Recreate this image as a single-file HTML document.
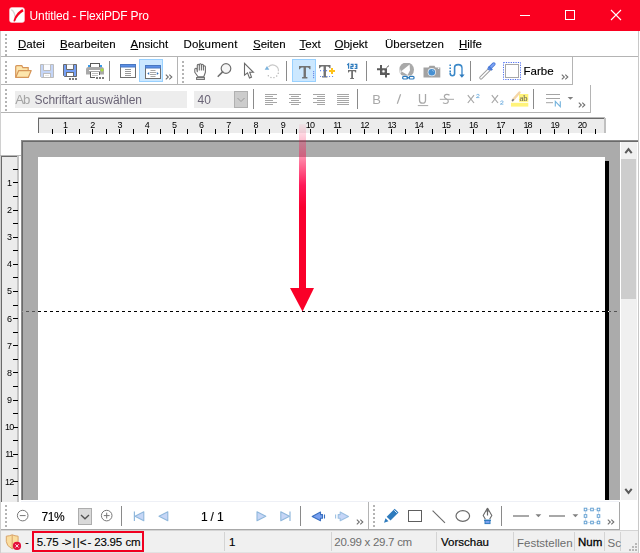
<!DOCTYPE html><html><head><meta charset="utf-8"><style>
*{margin:0;padding:0;box-sizing:border-box}
html,body{width:640px;height:553px;overflow:hidden;background:#fff;font-family:"Liberation Sans",sans-serif;position:relative}
.a{position:absolute}
.r{position:absolute}
.tx{position:absolute;white-space:nowrap;line-height:1}
svg{position:absolute;overflow:visible}
</style></head><body><div class="r" style="left:0px;top:0px;width:640px;height:31px;background:#fa0020;"></div>
<svg style="left:9px;top:7px" width="16" height="16" viewBox="0 0 16 16">
<rect x="0.5" y="0.5" width="15" height="15" rx="2.5" fill="#fff" stroke="#f6c8cc" stroke-width="0.6"/>
<path d="M2.3 2.6C4.6 3.8 6.2 6.5 6.6 13.6" stroke="#d4d4d4" stroke-width="1.4" fill="none"/>
<path d="M4.4 14.3C5.4 9.5 8.4 4.8 13.4 2L14.6 4.2C10.6 6.6 7.4 10.2 5.9 14.5Z" fill="#fa0020"/>
</svg>
<div class="tx" style="left:29.6px;top:10px;font-size:12px;color:#fff;letter-spacing:-0.15px">Untitled - FlexiPDF Pro</div>
<div class="r" style="left:520px;top:15px;width:10px;height:1px;background:#fff;"></div>
<div class="r" style="left:565px;top:10px;width:10px;height:10px;border:1px solid #fff"></div>
<svg style="left:611px;top:10px" width="10" height="10" viewBox="0 0 10 10"><path d="M0 0L10 10M10 0L0 10" stroke="#fff" stroke-width="1.1"/></svg>
<div class="r" style="left:0px;top:31px;width:1px;height:522px;background:#d0d0d0;"></div>
<div class="r" style="left:638px;top:31px;width:1px;height:522px;background:#c8c8c8;"></div>
<div class="r" style="left:1px;top:56px;width:637px;height:1px;background:#b4b4b4;"></div>
<div class="r" style="left:5px;top:34px;width:2px;height:2px;background:#b4b4b4;"></div><div class="r" style="left:5px;top:38px;width:2px;height:2px;background:#b4b4b4;"></div><div class="r" style="left:5px;top:42px;width:2px;height:2px;background:#b4b4b4;"></div><div class="r" style="left:5px;top:46px;width:2px;height:2px;background:#b4b4b4;"></div><div class="r" style="left:5px;top:50px;width:2px;height:2px;background:#b4b4b4;"></div><div class="r" style="left:5px;top:54px;width:2px;height:2px;background:#b4b4b4;"></div>
<div class="tx" style="left:18px;top:39px;font-size:11.5px;color:#000;-webkit-text-stroke:0.12px #000"><u>D</u>atei</div>
<div class="tx" style="left:60px;top:39px;font-size:11.5px;color:#000;-webkit-text-stroke:0.12px #000"><u>B</u>earbeiten</div>
<div class="tx" style="left:130.5px;top:39px;font-size:11.5px;color:#000;-webkit-text-stroke:0.12px #000"><u>A</u>nsicht</div>
<div class="tx" style="left:183.5px;top:39px;font-size:11.5px;color:#000;-webkit-text-stroke:0.12px #000"><span style="letter-spacing:0.2px">Do<u>k</u>ument</span></div>
<div class="tx" style="left:253px;top:39px;font-size:11.5px;color:#000;-webkit-text-stroke:0.12px #000"><u>S</u>eiten</div>
<div class="tx" style="left:299.5px;top:39px;font-size:11.5px;color:#000;-webkit-text-stroke:0.12px #000"><u>T</u>ext</div>
<div class="tx" style="left:334.5px;top:39px;font-size:11.5px;color:#000;-webkit-text-stroke:0.12px #000"><u>O</u>bjekt</div>
<div class="tx" style="left:385px;top:39px;font-size:11.5px;color:#000;-webkit-text-stroke:0.12px #000">Übersetzen</div>
<div class="tx" style="left:459px;top:39px;font-size:11.5px;color:#000;-webkit-text-stroke:0.12px #000"><u>H</u>ilfe</div>
<div class="r" style="left:1px;top:84px;width:572px;height:1px;background:#b4b4b4;"></div>
<div class="r" style="left:572px;top:57px;width:1px;height:28px;background:#b4b4b4;"></div>
<div class="r" style="left:177px;top:57px;width:1px;height:27px;background:#b4b4b4;"></div>
<div class="r" style="left:5px;top:61px;width:2px;height:2px;background:#b4b4b4;"></div><div class="r" style="left:5px;top:65px;width:2px;height:2px;background:#b4b4b4;"></div><div class="r" style="left:5px;top:69px;width:2px;height:2px;background:#b4b4b4;"></div><div class="r" style="left:5px;top:73px;width:2px;height:2px;background:#b4b4b4;"></div><div class="r" style="left:5px;top:77px;width:2px;height:2px;background:#b4b4b4;"></div><div class="r" style="left:5px;top:81px;width:2px;height:2px;background:#b4b4b4;"></div>
<div class="r" style="left:182px;top:61px;width:2px;height:2px;background:#b4b4b4;"></div><div class="r" style="left:182px;top:65px;width:2px;height:2px;background:#b4b4b4;"></div><div class="r" style="left:182px;top:69px;width:2px;height:2px;background:#b4b4b4;"></div><div class="r" style="left:182px;top:73px;width:2px;height:2px;background:#b4b4b4;"></div><div class="r" style="left:182px;top:77px;width:2px;height:2px;background:#b4b4b4;"></div><div class="r" style="left:182px;top:81px;width:2px;height:2px;background:#b4b4b4;"></div>
<div class="r" style="left:1px;top:112px;width:590px;height:1px;background:#b4b4b4;"></div>
<div class="r" style="left:590px;top:85px;width:1px;height:28px;background:#b4b4b4;"></div>
<div class="r" style="left:5px;top:89px;width:2px;height:2px;background:#b4b4b4;"></div><div class="r" style="left:5px;top:93px;width:2px;height:2px;background:#b4b4b4;"></div><div class="r" style="left:5px;top:97px;width:2px;height:2px;background:#b4b4b4;"></div><div class="r" style="left:5px;top:101px;width:2px;height:2px;background:#b4b4b4;"></div><div class="r" style="left:5px;top:105px;width:2px;height:2px;background:#b4b4b4;"></div><div class="r" style="left:5px;top:109px;width:2px;height:2px;background:#b4b4b4;"></div>
<div class="r" style="left:38px;top:117px;width:567px;height:1px;background:#b8b8b8;"></div>
<div class="r" style="left:38px;top:118px;width:566px;height:1px;background:#6a6a6a;"></div>
<div class="r" style="left:38px;top:118px;width:1px;height:15px;background:#6a6a6a;"></div>
<div class="r" style="left:39px;top:119px;width:565px;height:14px;background:#ececec;"></div>
<div class="r" style="left:604px;top:118px;width:2px;height:15px;background:#c0c0c0;"></div>
<div class="r" style="left:52px;top:129px;width:1px;height:5px;background:#000;"></div>
<div class="r" style="left:65px;top:129px;width:1px;height:5px;background:#000;"></div>
<div class="r" style="left:79px;top:129px;width:1px;height:5px;background:#000;"></div>
<div class="r" style="left:92px;top:129px;width:1px;height:5px;background:#000;"></div>
<div class="r" style="left:106px;top:129px;width:1px;height:5px;background:#000;"></div>
<div class="r" style="left:119px;top:129px;width:1px;height:5px;background:#000;"></div>
<div class="r" style="left:133px;top:129px;width:1px;height:5px;background:#000;"></div>
<div class="r" style="left:147px;top:129px;width:1px;height:5px;background:#000;"></div>
<div class="r" style="left:160px;top:129px;width:1px;height:5px;background:#000;"></div>
<div class="r" style="left:174px;top:129px;width:1px;height:5px;background:#000;"></div>
<div class="r" style="left:187px;top:129px;width:1px;height:5px;background:#000;"></div>
<div class="r" style="left:201px;top:129px;width:1px;height:5px;background:#000;"></div>
<div class="r" style="left:215px;top:129px;width:1px;height:5px;background:#000;"></div>
<div class="r" style="left:228px;top:129px;width:1px;height:5px;background:#000;"></div>
<div class="r" style="left:242px;top:129px;width:1px;height:5px;background:#000;"></div>
<div class="r" style="left:255px;top:129px;width:1px;height:5px;background:#000;"></div>
<div class="r" style="left:269px;top:129px;width:1px;height:5px;background:#000;"></div>
<div class="r" style="left:282px;top:129px;width:1px;height:5px;background:#000;"></div>
<div class="r" style="left:296px;top:129px;width:1px;height:5px;background:#000;"></div>
<div class="r" style="left:310px;top:129px;width:1px;height:5px;background:#000;"></div>
<div class="r" style="left:323px;top:129px;width:1px;height:5px;background:#000;"></div>
<div class="r" style="left:337px;top:129px;width:1px;height:5px;background:#000;"></div>
<div class="r" style="left:350px;top:129px;width:1px;height:5px;background:#000;"></div>
<div class="r" style="left:364px;top:129px;width:1px;height:5px;background:#000;"></div>
<div class="r" style="left:378px;top:129px;width:1px;height:5px;background:#000;"></div>
<div class="r" style="left:391px;top:129px;width:1px;height:5px;background:#000;"></div>
<div class="r" style="left:405px;top:129px;width:1px;height:5px;background:#000;"></div>
<div class="r" style="left:418px;top:129px;width:1px;height:5px;background:#000;"></div>
<div class="r" style="left:432px;top:129px;width:1px;height:5px;background:#000;"></div>
<div class="r" style="left:445px;top:129px;width:1px;height:5px;background:#000;"></div>
<div class="r" style="left:459px;top:129px;width:1px;height:5px;background:#000;"></div>
<div class="r" style="left:473px;top:129px;width:1px;height:5px;background:#000;"></div>
<div class="r" style="left:486px;top:129px;width:1px;height:5px;background:#000;"></div>
<div class="r" style="left:500px;top:129px;width:1px;height:5px;background:#000;"></div>
<div class="r" style="left:513px;top:129px;width:1px;height:5px;background:#000;"></div>
<div class="r" style="left:527px;top:129px;width:1px;height:5px;background:#000;"></div>
<div class="r" style="left:540px;top:129px;width:1px;height:5px;background:#000;"></div>
<div class="r" style="left:554px;top:129px;width:1px;height:5px;background:#000;"></div>
<div class="r" style="left:568px;top:129px;width:1px;height:5px;background:#000;"></div>
<div class="r" style="left:581px;top:129px;width:1px;height:5px;background:#000;"></div>
<div class="r" style="left:595px;top:129px;width:1px;height:5px;background:#000;"></div>
<div class="tx" style="left:55.6px;top:120.6px;width:20px;text-align:center;font-size:9px;color:#000;letter-spacing:-0.8px;text-indent:-0.8px">1</div>
<div class="tx" style="left:82.8px;top:120.6px;width:20px;text-align:center;font-size:9px;color:#000;letter-spacing:-0.8px;text-indent:-0.8px">2</div>
<div class="tx" style="left:110.0px;top:120.6px;width:20px;text-align:center;font-size:9px;color:#000;letter-spacing:-0.8px;text-indent:-0.8px">3</div>
<div class="tx" style="left:137.2px;top:120.6px;width:20px;text-align:center;font-size:9px;color:#000;letter-spacing:-0.8px;text-indent:-0.8px">4</div>
<div class="tx" style="left:164.4px;top:120.6px;width:20px;text-align:center;font-size:9px;color:#000;letter-spacing:-0.8px;text-indent:-0.8px">5</div>
<div class="tx" style="left:191.6px;top:120.6px;width:20px;text-align:center;font-size:9px;color:#000;letter-spacing:-0.8px;text-indent:-0.8px">6</div>
<div class="tx" style="left:218.8px;top:120.6px;width:20px;text-align:center;font-size:9px;color:#000;letter-spacing:-0.8px;text-indent:-0.8px">7</div>
<div class="tx" style="left:246.0px;top:120.6px;width:20px;text-align:center;font-size:9px;color:#000;letter-spacing:-0.8px;text-indent:-0.8px">8</div>
<div class="tx" style="left:273.2px;top:120.6px;width:20px;text-align:center;font-size:9px;color:#000;letter-spacing:-0.8px;text-indent:-0.8px">9</div>
<div class="tx" style="left:300.4px;top:120.6px;width:20px;text-align:center;font-size:9px;color:#000;letter-spacing:-0.8px;text-indent:-0.8px">10</div>
<div class="tx" style="left:327.6px;top:120.6px;width:20px;text-align:center;font-size:9px;color:#000;letter-spacing:-0.8px;text-indent:-0.8px">11</div>
<div class="tx" style="left:354.8px;top:120.6px;width:20px;text-align:center;font-size:9px;color:#000;letter-spacing:-0.8px;text-indent:-0.8px">12</div>
<div class="tx" style="left:382.0px;top:120.6px;width:20px;text-align:center;font-size:9px;color:#000;letter-spacing:-0.8px;text-indent:-0.8px">13</div>
<div class="tx" style="left:409.2px;top:120.6px;width:20px;text-align:center;font-size:9px;color:#000;letter-spacing:-0.8px;text-indent:-0.8px">14</div>
<div class="tx" style="left:436.4px;top:120.6px;width:20px;text-align:center;font-size:9px;color:#000;letter-spacing:-0.8px;text-indent:-0.8px">15</div>
<div class="tx" style="left:463.6px;top:120.6px;width:20px;text-align:center;font-size:9px;color:#000;letter-spacing:-0.8px;text-indent:-0.8px">16</div>
<div class="tx" style="left:490.8px;top:120.6px;width:20px;text-align:center;font-size:9px;color:#000;letter-spacing:-0.8px;text-indent:-0.8px">17</div>
<div class="tx" style="left:518.0px;top:120.6px;width:20px;text-align:center;font-size:9px;color:#000;letter-spacing:-0.8px;text-indent:-0.8px">18</div>
<div class="tx" style="left:545.2px;top:120.6px;width:20px;text-align:center;font-size:9px;color:#000;letter-spacing:-0.8px;text-indent:-0.8px">19</div>
<div class="tx" style="left:572.4px;top:120.6px;width:20px;text-align:center;font-size:9px;color:#000;letter-spacing:-0.8px;text-indent:-0.8px">20</div>
<div class="r" style="left:0px;top:155px;width:21px;height:1px;background:#b8b8b8;"></div>
<div class="r" style="left:1px;top:156px;width:16px;height:1px;background:#6a6a6a;"></div>
<div class="r" style="left:1px;top:156px;width:1px;height:346px;background:#6a6a6a;"></div>
<div class="r" style="left:2px;top:157px;width:15px;height:345px;background:#ececec;"></div>
<div class="r" style="left:17px;top:156px;width:2px;height:346px;background:#c4c4c4;"></div>
<div class="r" style="left:13px;top:169px;width:5px;height:1px;background:#000;"></div>
<div class="r" style="left:13px;top:182px;width:5px;height:1px;background:#000;"></div>
<div class="r" style="left:13px;top:196px;width:5px;height:1px;background:#000;"></div>
<div class="r" style="left:13px;top:210px;width:5px;height:1px;background:#000;"></div>
<div class="r" style="left:13px;top:223px;width:5px;height:1px;background:#000;"></div>
<div class="r" style="left:13px;top:237px;width:5px;height:1px;background:#000;"></div>
<div class="r" style="left:13px;top:250px;width:5px;height:1px;background:#000;"></div>
<div class="r" style="left:13px;top:264px;width:5px;height:1px;background:#000;"></div>
<div class="r" style="left:13px;top:277px;width:5px;height:1px;background:#000;"></div>
<div class="r" style="left:13px;top:291px;width:5px;height:1px;background:#000;"></div>
<div class="r" style="left:13px;top:305px;width:5px;height:1px;background:#000;"></div>
<div class="r" style="left:13px;top:318px;width:5px;height:1px;background:#000;"></div>
<div class="r" style="left:13px;top:332px;width:5px;height:1px;background:#000;"></div>
<div class="r" style="left:13px;top:345px;width:5px;height:1px;background:#000;"></div>
<div class="r" style="left:13px;top:359px;width:5px;height:1px;background:#000;"></div>
<div class="r" style="left:13px;top:372px;width:5px;height:1px;background:#000;"></div>
<div class="r" style="left:13px;top:386px;width:5px;height:1px;background:#000;"></div>
<div class="r" style="left:13px;top:400px;width:5px;height:1px;background:#000;"></div>
<div class="r" style="left:13px;top:413px;width:5px;height:1px;background:#000;"></div>
<div class="r" style="left:13px;top:427px;width:5px;height:1px;background:#000;"></div>
<div class="r" style="left:13px;top:440px;width:5px;height:1px;background:#000;"></div>
<div class="r" style="left:13px;top:454px;width:5px;height:1px;background:#000;"></div>
<div class="r" style="left:13px;top:468px;width:5px;height:1px;background:#000;"></div>
<div class="r" style="left:13px;top:481px;width:5px;height:1px;background:#000;"></div>
<div class="r" style="left:13px;top:495px;width:5px;height:1px;background:#000;"></div>
<div class="tx" style="left:-0.4px;top:178.8px;width:20px;text-align:center;font-size:9px;color:#000;letter-spacing:-0.8px;text-indent:-0.8px">1</div>
<div class="tx" style="left:-0.4px;top:205.9px;width:20px;text-align:center;font-size:9px;color:#000;letter-spacing:-0.8px;text-indent:-0.8px">2</div>
<div class="tx" style="left:-0.4px;top:233.1px;width:20px;text-align:center;font-size:9px;color:#000;letter-spacing:-0.8px;text-indent:-0.8px">3</div>
<div class="tx" style="left:-0.4px;top:260.2px;width:20px;text-align:center;font-size:9px;color:#000;letter-spacing:-0.8px;text-indent:-0.8px">4</div>
<div class="tx" style="left:-0.4px;top:287.4px;width:20px;text-align:center;font-size:9px;color:#000;letter-spacing:-0.8px;text-indent:-0.8px">5</div>
<div class="tx" style="left:-0.4px;top:314.6px;width:20px;text-align:center;font-size:9px;color:#000;letter-spacing:-0.8px;text-indent:-0.8px">6</div>
<div class="tx" style="left:-0.4px;top:341.7px;width:20px;text-align:center;font-size:9px;color:#000;letter-spacing:-0.8px;text-indent:-0.8px">7</div>
<div class="tx" style="left:-0.4px;top:368.9px;width:20px;text-align:center;font-size:9px;color:#000;letter-spacing:-0.8px;text-indent:-0.8px">8</div>
<div class="tx" style="left:-0.4px;top:396.0px;width:20px;text-align:center;font-size:9px;color:#000;letter-spacing:-0.8px;text-indent:-0.8px">9</div>
<div class="tx" style="left:-0.4px;top:423.2px;width:20px;text-align:center;font-size:9px;color:#000;letter-spacing:-0.8px;text-indent:-0.8px">10</div>
<div class="tx" style="left:-0.4px;top:450.4px;width:20px;text-align:center;font-size:9px;color:#000;letter-spacing:-0.8px;text-indent:-0.8px">11</div>
<div class="tx" style="left:-0.4px;top:477.5px;width:20px;text-align:center;font-size:9px;color:#000;letter-spacing:-0.8px;text-indent:-0.8px">12</div>
<div class="r" style="left:21px;top:140px;width:599px;height:360px;background:#ababab;"></div>
<div class="r" style="left:21px;top:140px;width:617px;height:1px;background:#8c8c8c;"></div>
<div class="r" style="left:21px;top:140px;width:1px;height:360px;background:#8c8c8c;"></div>
<div class="r" style="left:22px;top:141px;width:616px;height:1px;background:#6a6a6a;"></div>
<div class="r" style="left:22px;top:141px;width:1px;height:359px;background:#6a6a6a;"></div>
<div class="r" style="left:38px;top:157px;width:567px;height:343px;background:#fff;"></div>
<div class="r" style="left:605px;top:161px;width:4px;height:339px;background:#000;"></div>
<div class="r" style="left:620px;top:142px;width:1px;height:358px;background:#fff;"></div>
<div class="r" style="left:621px;top:142px;width:17px;height:358px;background:#f0f0f0;"></div>
<div class="r" style="left:637px;top:142px;width:1px;height:358px;background:#fff;"></div>
<div class="r" style="left:621px;top:159px;width:15px;height:140px;background:#cdcdcd;"></div>
<svg style="left:624px;top:147px" width="10" height="8" viewBox="0 0 10 8"><path d="M1.3 6.2L4.5 2.2L7.7 6.2" stroke="#5a5a5a" stroke-width="2" fill="none"/></svg>
<svg style="left:624px;top:487px" width="10" height="8" viewBox="0 0 10 8"><path d="M1.3 1.8L4.5 5.8L7.7 1.8" stroke="#5a5a5a" stroke-width="2" fill="none"/></svg>
<div class="r" style="left:22px;top:311px;width:595px;height:1px;background:repeating-linear-gradient(to right,#fff 0 3px,transparent 3px 6px);background-position:-2px 0;mix-blend-mode:difference"></div>
<div class="r" style="left:299px;top:124px;width:7px;height:166px;background:linear-gradient(to bottom,rgba(255,0,70,0.04),rgba(255,0,70,0.45) 20%,rgba(255,0,70,0.9) 37%,#fa0030 50%,#fa0028 100%)"></div>
<svg style="left:289px;top:287px" width="26" height="25" viewBox="0 0 26 25"><path d="M1 1L25 1L13.5 24.5Z" fill="#fa0028"/></svg>
<div class="r" style="left:21px;top:501px;width:598px;height:1px;background:#eef0f6;"></div>
<div class="r" style="left:1px;top:529px;width:619px;height:1px;background:#a8a8a8;"></div>
<div class="r" style="left:619px;top:502px;width:1px;height:28px;background:#a8a8a8;"></div>
<div class="r" style="left:368px;top:502px;width:1px;height:27px;background:#b4b4b4;"></div>
<div class="r" style="left:5px;top:505px;width:2px;height:2px;background:#b4b4b4;"></div><div class="r" style="left:5px;top:509px;width:2px;height:2px;background:#b4b4b4;"></div><div class="r" style="left:5px;top:513px;width:2px;height:2px;background:#b4b4b4;"></div><div class="r" style="left:5px;top:517px;width:2px;height:2px;background:#b4b4b4;"></div><div class="r" style="left:5px;top:521px;width:2px;height:2px;background:#b4b4b4;"></div><div class="r" style="left:5px;top:525px;width:2px;height:2px;background:#b4b4b4;"></div>
<div class="r" style="left:373px;top:505px;width:2px;height:2px;background:#b4b4b4;"></div><div class="r" style="left:373px;top:509px;width:2px;height:2px;background:#b4b4b4;"></div><div class="r" style="left:373px;top:513px;width:2px;height:2px;background:#b4b4b4;"></div><div class="r" style="left:373px;top:517px;width:2px;height:2px;background:#b4b4b4;"></div><div class="r" style="left:373px;top:521px;width:2px;height:2px;background:#b4b4b4;"></div><div class="r" style="left:373px;top:525px;width:2px;height:2px;background:#b4b4b4;"></div>
<div class="r" style="left:1px;top:530px;width:637px;height:1px;background:#d4d4d4;"></div>
<div class="r" style="left:1px;top:531px;width:637px;height:22px;background:#f0f0f0;"></div>
<div class="r" style="left:1px;top:552px;width:637px;height:1px;background:#e2e2e2;"></div>
<div class="r" style="left:224px;top:532px;width:1px;height:19px;background:#d4d4d4;"></div>
<div class="r" style="left:331px;top:532px;width:1px;height:19px;background:#d4d4d4;"></div>
<div class="r" style="left:436px;top:532px;width:1px;height:19px;background:#d4d4d4;"></div>
<div class="r" style="left:513px;top:532px;width:1px;height:19px;background:#d4d4d4;"></div>
<div class="r" style="left:574px;top:532px;width:1px;height:19px;background:#d4d4d4;"></div>
<div class="r" style="left:604px;top:532px;width:1px;height:19px;background:#d4d4d4;"></div>
<div class="r" style="left:620px;top:532px;width:1px;height:19px;background:#d4d4d4;"></div>
<div class="r" style="left:32px;top:531px;width:112px;height:21px;border:2px solid #f00020"></div>
<div class="tx" style="left:36.8px;top:537.2px;font-size:11.5px;color:#000;letter-spacing:-0.2px;-webkit-text-stroke:0.12px #000">5.75</div>
<div class="tx" style="left:61.8px;top:537.2px;font-size:11.5px;color:#000;letter-spacing:-0.2px;-webkit-text-stroke:0.12px #000">-</div>
<div class="tx" style="left:64.8px;top:537.2px;font-size:11.5px;color:#000;letter-spacing:-0.2px;-webkit-text-stroke:0.12px #000">&gt;</div>
<div class="tx" style="left:72.4px;top:537.2px;font-size:11.5px;color:#000;letter-spacing:-0.2px;-webkit-text-stroke:0.12px #000">|</div>
<div class="tx" style="left:76.7px;top:537.2px;font-size:11.5px;color:#000;letter-spacing:-0.2px;-webkit-text-stroke:0.12px #000">|</div>
<div class="tx" style="left:79.8px;top:537.2px;font-size:11.5px;color:#000;letter-spacing:-0.2px;-webkit-text-stroke:0.12px #000">&lt;</div>
<div class="tx" style="left:87.4px;top:537.2px;font-size:11.5px;color:#000;letter-spacing:-0.2px;-webkit-text-stroke:0.12px #000">-</div>
<div class="tx" style="left:94.2px;top:537.2px;font-size:11.5px;color:#000;letter-spacing:-0.2px;-webkit-text-stroke:0.12px #000">23.95</div>
<div class="tx" style="left:125.4px;top:537.2px;font-size:11.5px;color:#000;letter-spacing:-0.2px;-webkit-text-stroke:0.12px #000">cm</div>
<div class="tx" style="left:25px;top:536.6px;font-size:11.5px;color:#000;">-</div>
<div class="tx" style="left:229px;top:537.2px;font-size:11.5px;color:#000;-webkit-text-stroke:0.15px #000">1</div>
<div class="tx" style="left:334.3px;top:537.2px;font-size:11.5px;color:#6d6d6d;letter-spacing:-0.28px">20.99 x 29.7 cm</div>
<div class="tx" style="left:441px;top:537.2px;font-size:11.5px;color:#000;-webkit-text-stroke:0.2px #000">Vorschau</div>
<div class="tx" style="left:517px;top:537.5px;font-size:11.5px;color:#6d6d6d;">Feststellen</div>
<div class="tx" style="left:578px;top:537.2px;font-size:11.5px;color:#000;-webkit-text-stroke:0.3px #000">Num</div>
<div class="tx" style="left:607.5px;top:537.5px;font-size:11.5px;color:#6d6d6d;">Sc</div>
<div class="r" style="left:635px;top:543px;width:2px;height:2px;background:#b8b8b8;"></div>
<div class="r" style="left:632px;top:546px;width:2px;height:2px;background:#b8b8b8;"></div>
<div class="r" style="left:635px;top:546px;width:2px;height:2px;background:#b8b8b8;"></div>
<div class="r" style="left:629px;top:549px;width:2px;height:2px;background:#b8b8b8;"></div>
<div class="r" style="left:632px;top:549px;width:2px;height:2px;background:#b8b8b8;"></div>
<div class="r" style="left:635px;top:549px;width:2px;height:2px;background:#b8b8b8;"></div>
<svg style="left:15px;top:65px" width="18" height="14" viewBox="0 0 18 14"><path d="M0.7 12.3V1.8Q0.7 0.7 1.8 0.7H6.8L7.9 2.6H13.2V5.6" fill="#fde6ad" stroke="#d6965a" stroke-width="1.2"/><path d="M0.7 12.4L3.7 5.6H16.2L13.3 12.4Z" fill="#fde6ad" stroke="#d6965a" stroke-width="1.2" stroke-linejoin="round"/></svg>
<svg style="left:40px;top:64px" width="14" height="14" viewBox="0 0 14 14"><path d="M0.5 0.5H13.5V13.5H1.5L0.5 12.5Z" fill="#c4d5f7" stroke="#bcbcbc"/><path d="M3.5 0.5V6.5H10.5V0.5" fill="#fbfcff" stroke="#bcbcbc"/><rect x="3.5" y="9.5" width="7" height="4" fill="#fff" stroke="#bcbcbc"/><path d="M5 11.5H9" stroke="#e4e4e4"/></svg>
<svg style="left:63px;top:64px" width="15" height="17" viewBox="0 0 15 17"><path d="M0.5 0.5H13.5V12.5H1.5L0.5 11.5Z" fill="#76a0f4" stroke="#6a6a6a"/><path d="M3.5 0.5V5.5H10.5V0.5" fill="#fbfcff" stroke="#6a6a6a"/><rect x="3.5" y="8.5" width="7" height="4" fill="#fff" stroke="#6a6a6a"/><rect x="6" y="14" width="2" height="2" fill="#7a7a7a"/><rect x="9" y="14" width="2" height="2" fill="#7a7a7a"/><rect x="12" y="14" width="2" height="2" fill="#7a7a7a"/></svg>
<svg style="left:86px;top:63px" width="19" height="17" viewBox="0 0 19 17"><rect x="2" y="2" width="2" height="2" fill="#3a9ae8"/><rect x="14" y="2" width="2" height="2" fill="#3a9ae8"/><rect x="4.5" y="0.5" width="9" height="4" fill="#fff" stroke="#5a5a5a"/><path d="M0 6.5Q0 4 2.5 4H15.5Q18 4 18 6.5V11.5H0Z" fill="#a9a9a9"/><rect x="3" y="7" width="11" height="1" fill="#fff"/><path d="M16 5.5V8.5M14.5 7H17.5" stroke="#a8e03a" stroke-width="1.6"/><path d="M4.5 9V14.5H9" stroke="#5a5a5a" fill="none"/><path d="M5 9H13.5V12.5" fill="#fff"/><rect x="5" y="9" width="8.5" height="5" fill="#fff"/><path d="M4.5 9V14.5H9M13.5 9V12" stroke="#5a5a5a" fill="none"/><path d="M6 10.5H12M6 12.5H12" stroke="#c0c0c0"/><rect x="10" y="14" width="2" height="2" fill="#7a7a7a"/><rect x="13" y="14" width="2" height="2" fill="#7a7a7a"/><rect x="16" y="14" width="2" height="2" fill="#7a7a7a"/></svg>
<div class="r" style="left:109px;top:61px;width:1px;height:20px;background:#8a8a8a"></div>
<svg style="left:120px;top:64px" width="16" height="14" viewBox="0 0 16 14"><rect x="0.5" y="0.5" width="15" height="13" fill="#fff" stroke="#6e6e6e"/><rect x="0.5" y="0.5" width="15" height="2.5" fill="#5b8fe8" stroke="#4a78c0" stroke-width="1"/><path d="M5 5.5H11M5 7.5H11M5 9.5H11M5 11.5H11" stroke="#9a9a9a"/></svg>
<div class="r" style="left:139px;top:59px;width:24px;height:23px;background:#cce8ff;border:1px solid #99d1ff"></div>
<svg style="left:145px;top:65px" width="16" height="14" viewBox="0 0 16 14"><rect x="0.5" y="0.5" width="15" height="13" fill="#fff" stroke="#6e6e6e"/><rect x="0.5" y="0.5" width="15" height="2.5" fill="#5b8fe8" stroke="#4a78c0" stroke-width="1"/><path d="M5.5 5.5H10.5M5 7.5H11M5 9.5H11M5.5 11.5H10.5" stroke="#a8a8a8"/><path d="M2.3 8.5L4.2 7V10Z M13.7 8.5L11.8 7V10Z" fill="#2f6fb8"/></svg>
<svg style="left:165px;top:74px" width="8" height="6" viewBox="0 0 8 6"><path d="M0.8 0.7L3.3 3L0.8 5.3M4.3 0.7L6.8 3L4.3 5.3" stroke="#707070" stroke-width="1.1" fill="none"/></svg>
<svg style="left:190px;top:60px" width="20" height="22" viewBox="0 0 20 22"><path d="M8 16.8L4.8 12.2V9.3Q4.8 8.3 5.8 8.3Q6.8 8.3 6.9 9.3L7.3 11.8V5.2Q7.3 4.2 8.3 4.2Q9.3 4.2 9.3 5.2V4.8Q9.3 3.8 10.4 3.8Q11.4 3.8 11.4 4.8V5.3Q11.4 4.3 12.4 4.3Q13.4 4.3 13.4 5.3V6.7Q13.4 5.7 14.4 5.7Q15.4 5.7 15.4 6.7V12.2L13.8 16.8Z" fill="#fff" stroke="#6e6e6e" stroke-width="1.1" stroke-linejoin="round"/><path d="M9.3 5V10.6M11.4 5V10.6M13.4 5.5V10.6" stroke="#6e6e6e" stroke-width="1.1"/><rect x="6.6" y="17.6" width="7.8" height="1.8" fill="#fff" stroke="#6e6e6e" stroke-width="1.1"/></svg>
<svg style="left:216px;top:62px" width="16" height="16" viewBox="0 0 16 16"><circle cx="10" cy="6.5" r="4.8" fill="#f6f6f6" stroke="#707070" stroke-width="1.2"/><path d="M6.6 9.9L2.2 14.3" stroke="#707070" stroke-width="1.6" stroke-linecap="round"/></svg>
<svg style="left:240px;top:60px" width="18" height="22" viewBox="0 0 18 22"><path d="M4.5 3.3V15.2L7.5 12.9L9.5 18L11.5 17.1L9.7 12.3H13.4Z" fill="#fff" stroke="#6a6a6a" stroke-width="1.1" stroke-linejoin="miter"/></svg>
<svg style="left:262px;top:62px" width="20" height="18" viewBox="0 0 20 18"><path d="M6.5 4.8A5.7 5.7 0 0 1 16.4 9.2" stroke="#c8c8c8" stroke-width="1.1" fill="none"/><path d="M16.2 11.2A5.7 5.7 0 0 1 5.2 11.8" stroke="#b0b0b0" stroke-width="1.3" fill="none" stroke-dasharray="0.1 3" stroke-linecap="round"/><path d="M2.7 7.7L5 3.9L7.3 7.7Z" fill="#7ab2dc"/></svg>
<div class="r" style="left:286px;top:61px;width:1px;height:20px;background:#8a8a8a"></div>
<div class="r" style="left:292px;top:59px;width:24px;height:23px;background:#cce8ff;border:1px solid #99d1ff"></div>
<svg style="left:298.8px;top:65.6px" width="12" height="13" viewBox="0 0 12 13"><path d="M0 0H11.5V3.3H10.5Q10.3 1.6 8.6 1.6H6.95V10.9H8.4V12.4H3.1V10.9H4.55V1.6H2.9Q1.2 1.6 1 3.3H0Z" fill="#727272"/></svg>
<svg style="left:313px;top:71px" width="2" height="8" viewBox="0 0 2 8"><rect x="0" y="0" width="1.2" height="1.2" fill="#7090e8"/><rect x="0" y="2" width="1.2" height="1.2" fill="#7090e8"/><rect x="0" y="4" width="1.2" height="1.2" fill="#7090e8"/><rect x="0" y="6" width="1.2" height="1.2" fill="#7090e8"/></svg>
<svg style="left:319px;top:65px" width="18" height="13" viewBox="0 0 18 13"><path d="M0 0H11.5V3.3H10.5Q10.3 1.6 8.6 1.6H6.95V10.9H8.4V12.4H3.1V10.9H4.55V1.6H2.9Q1.2 1.6 1 3.3H0Z" fill="#727272"/><path d="M1 5.6H11M1 11.5H15" stroke="#6a8ae8" stroke-width="1.1" stroke-dasharray="1.1 1.9"/><path d="M13 3V9M10 6H16" stroke="#ffc21a" stroke-width="2"/></svg>
<svg style="left:346px;top:63px" width="12" height="7" viewBox="0 0 12 7"><path d="M1.2 1.9L2.6 0.8V5.8" stroke="#2f7bbd" stroke-width="1.25" fill="none"/><path d="M4.6 1.3H7V3.3H4.9V5.3H7.3" stroke="#2f7bbd" stroke-width="1.25" fill="none"/><path d="M8.6 1.3H10.8V5.3H8.6M9.4 3.3H10.8" stroke="#2f7bbd" stroke-width="1.25" fill="none"/></svg>
<svg style="left:348px;top:70px" width="9" height="10" viewBox="0 0 9 10"><path d="M0 0H8.2V2.6H7.4Q7.2 1.2 6 1.2H5V8.1H6V9.1H2.2V8.1H3.2V1.2H2.2Q1 1.2 0.8 2.6H0Z" fill="#707070"/></svg>
<div class="r" style="left:366px;top:61px;width:1px;height:20px;background:#8a8a8a"></div>
<svg style="left:376px;top:64px" width="14" height="14" viewBox="0 0 14 14"><path d="M5 1V10M1 5.2H10M10 4.3V13.6M4 10H13.6" stroke="#5a5a5a" stroke-width="2"/><rect x="5" y="5.2" width="5" height="4.8" fill="#5a5a5a"/><circle cx="7.5" cy="7.3" r="1.4" fill="#fff" stroke="#909090" stroke-width="0.6"/><path d="M10.5 3.7L13 1.6" stroke="#5a5a5a" stroke-width="1"/></svg>
<svg style="left:398px;top:63px" width="18" height="17" viewBox="0 0 18 17"><defs><clipPath id="gc"><rect x="0" y="0" width="18" height="12.6"/></clipPath></defs><g clip-path="url(#gc)"><circle cx="8.6" cy="6.8" r="7.4" fill="#a9a9a9"/><path d="M1.5 5Q1 8 2.2 11L3.5 9Z" fill="#e6e6e6"/><path d="M3.2 8.3L11.6 1.6L12 7.2L9.6 12Z" fill="#fff"/></g><rect x="4.6" y="13.4" width="5" height="2.6" rx="1.3" fill="none" stroke="#2f7bbd" stroke-width="1.2"/><rect x="11.1" y="13.4" width="5" height="2.6" rx="1.3" fill="none" stroke="#2f7bbd" stroke-width="1.2"/><path d="M8.5 14.7H12" stroke="#2f7bbd" stroke-width="1.2"/></svg>
<svg style="left:423px;top:65px" width="18" height="13" viewBox="0 0 18 13"><path d="M0.5 2.5H5.5L6.5 0.7H11.5L12.5 2.5H17.3V12.5H0.5Z" fill="#a2a2a2"/><circle cx="8.8" cy="7.2" r="4.1" fill="#e8eef4"/><circle cx="8.8" cy="7.2" r="3.3" fill="#4690d2"/><path d="M9.3 5.2L10.6 6.3" stroke="#bcd8f0" stroke-width="0.9"/><circle cx="15.6" cy="3.3" r="0.8" fill="#fff"/></svg>
<svg style="left:448px;top:63px" width="18" height="16" viewBox="0 0 18 16"><path d="M2.2 1.5V3M2.2 4.5V6M2.2 7.5V9" stroke="#3a88c8" stroke-width="1.6"/><path d="M2.2 9.5V10.6Q2.2 12.8 4.4 12.8Q6.6 12.8 6.6 10.6V4.5Q6.6 1.6 10.2 1.6Q13.8 1.6 13.8 4.5V12" stroke="#3a88c8" stroke-width="1.6" fill="none"/><path d="M13.8 4.5V12" stroke="#78aedc" stroke-width="1.6"/><path d="M11.2 11.5H16.6L13.9 14.8Z" fill="#2f7bbd"/></svg>
<div class="r" style="left:470px;top:61px;width:1px;height:20px;background:#8a8a8a"></div>
<svg style="left:478px;top:62px" width="20" height="18" viewBox="0 0 20 18"><path d="M3 15.8L11.8 7" stroke="#a0a0a0" stroke-width="3.6" stroke-linecap="round"/><path d="M3 15.8L11.8 7" stroke="#fff" stroke-width="1.6" stroke-linecap="round"/><path d="M11.3 6.6L15.8 2.1" stroke="#4a7ad8" stroke-width="3.6" stroke-linecap="round"/><path d="M11.3 6.6L15.8 2.1" stroke="#80a4f4" stroke-width="1.8" stroke-linecap="round"/><path d="M10.6 4.5L14.2 8.1" stroke="#4a7ad8" stroke-width="2"/></svg>
<svg style="left:503px;top:62px" width="18" height="18" viewBox="0 0 18 18"><rect x="0.5" y="0.5" width="17" height="17" fill="none" stroke="#4a6cf0" stroke-width="1" stroke-dasharray="1.2 1.2"/></svg>
<div class="r" style="left:505px;top:64px;width:14px;height:14px;border:1px solid #a8a8a8;background:#fff"></div>
<div class="tx" style="left:523.6px;top:66px;font-size:11.5px;color:#000;-webkit-text-stroke:0.15px #000">Farbe</div>
<svg style="left:561px;top:74px" width="8" height="6" viewBox="0 0 8 6"><path d="M0.8 0.7L3.3 3L0.8 5.3M4.3 0.7L6.8 3L4.3 5.3" stroke="#707070" stroke-width="1.1" fill="none"/></svg>
<div class="r" style="left:15px;top:91px;width:172px;height:17px;background:#ededed;"></div>
<div class="tx" style="left:15.2px;top:92.6px;font-size:13.2px;color:#a4a4a4;letter-spacing:-1px">Ab</div>
<div class="tx" style="left:34.6px;top:93.5px;font-size:12px;color:#6a6476;letter-spacing:-0.07px">Schriftart auswählen</div>
<div class="r" style="left:194px;top:91px;width:54px;height:17px;background:#ededed;"></div>
<div class="tx" style="left:197.5px;top:93.5px;font-size:12px;color:#6a6476;">40</div>
<div class="r" style="left:234px;top:91px;width:14px;height:17px;background:#cccccc;border:1px solid #b0b0b0"></div>
<svg style="left:236px;top:97px" width="10" height="6" viewBox="0 0 10 6"><path d="M1.5 1L5 4.5L8.5 1" stroke="#9a9a9a" stroke-width="1" fill="none"/></svg>
<div class="r" style="left:253px;top:89px;width:1px;height:20px;background:#8a8a8a;"></div>
<div class="r" style="left:265px;top:94px;width:12px;height:1px;background:#a6a6a6;"></div><div class="r" style="left:265px;top:96px;width:8px;height:1px;background:#a6a6a6;"></div><div class="r" style="left:265px;top:98px;width:12px;height:1px;background:#a6a6a6;"></div><div class="r" style="left:265px;top:100px;width:8px;height:1px;background:#a6a6a6;"></div><div class="r" style="left:265px;top:102px;width:12px;height:1px;background:#a6a6a6;"></div><div class="r" style="left:265px;top:104px;width:8px;height:1px;background:#a6a6a6;"></div>
<div class="r" style="left:289px;top:94px;width:12px;height:1px;background:#a6a6a6;"></div><div class="r" style="left:291px;top:96px;width:8px;height:1px;background:#a6a6a6;"></div><div class="r" style="left:289px;top:98px;width:12px;height:1px;background:#a6a6a6;"></div><div class="r" style="left:291px;top:100px;width:8px;height:1px;background:#a6a6a6;"></div><div class="r" style="left:289px;top:102px;width:12px;height:1px;background:#a6a6a6;"></div><div class="r" style="left:291px;top:104px;width:8px;height:1px;background:#a6a6a6;"></div>
<div class="r" style="left:313px;top:94px;width:12px;height:1px;background:#a6a6a6;"></div><div class="r" style="left:317px;top:96px;width:8px;height:1px;background:#a6a6a6;"></div><div class="r" style="left:313px;top:98px;width:12px;height:1px;background:#a6a6a6;"></div><div class="r" style="left:317px;top:100px;width:8px;height:1px;background:#a6a6a6;"></div><div class="r" style="left:313px;top:102px;width:12px;height:1px;background:#a6a6a6;"></div><div class="r" style="left:317px;top:104px;width:8px;height:1px;background:#a6a6a6;"></div>
<div class="r" style="left:337px;top:94px;width:12px;height:1px;background:#a6a6a6;"></div><div class="r" style="left:337px;top:96px;width:12px;height:1px;background:#a6a6a6;"></div><div class="r" style="left:337px;top:98px;width:12px;height:1px;background:#a6a6a6;"></div><div class="r" style="left:337px;top:100px;width:12px;height:1px;background:#a6a6a6;"></div><div class="r" style="left:337px;top:102px;width:12px;height:1px;background:#a6a6a6;"></div><div class="r" style="left:337px;top:104px;width:12px;height:1px;background:#a6a6a6;"></div>
<div class="r" style="left:357px;top:89px;width:1px;height:20px;background:#8a8a8a;"></div>
<div class="tx" style="left:372.2px;top:93px;font-size:13px;color:#a8a8a8;">B</div>
<svg style="left:396px;top:94px" width="6" height="10" viewBox="0 0 6 10"><path d="M4.6 0.3L1.3 9.7" stroke="#a8a8a8" stroke-width="1.2"/></svg>
<svg style="left:417px;top:94px" width="12" height="13" viewBox="0 0 12 13"><path d="M2.5 0V6.2Q2.5 9.2 5.5 9.2Q8.5 9.2 8.5 6.2V0" stroke="#a8a8a8" stroke-width="1.3" fill="none"/><path d="M0.8 11.6H11.2" stroke="#a8a8a8" stroke-width="1"/></svg>
<svg style="left:439px;top:94px" width="16" height="11" viewBox="0 0 16 11"><path d="M10.5 1.2Q9.5 0.3 7.8 0.3Q5.3 0.3 5.3 2.6Q5.3 4.2 7.5 5Q9.5 5.8 9.3 7.5Q9 9.5 6.5 9.5Q4.8 9.5 4 8.6" stroke="#a8a8a8" stroke-width="1.2" fill="none"/><path d="M0.8 5.3H15" stroke="#a8a8a8" stroke-width="1"/></svg>
<svg style="left:467px;top:94px" width="14" height="10" viewBox="0 0 14 10"><path d="M0.8 1.2L7 9M7 1.2L0.8 9" stroke="#a8a8a8" stroke-width="1.2"/><path d="M9.3 1.2Q10 0.3 11 0.3Q12.2 0.3 12.2 1.3Q12.2 2.2 9.3 3.6H12.4" stroke="#66a8dc" stroke-width="0.75" fill="none"/></svg>
<svg style="left:491px;top:94px" width="14" height="12" viewBox="0 0 14 12"><path d="M0.8 1.2L7 9M7 1.2L0.8 9" stroke="#a8a8a8" stroke-width="1.2"/><path d="M9.3 7.8Q10 6.9 11 6.9Q12.2 6.9 12.2 7.9Q12.2 8.8 9.3 10.2H12.4" stroke="#66a8dc" stroke-width="0.75" fill="none"/></svg>
<svg style="left:511px;top:91px" width="18" height="16" viewBox="0 0 18 16"><rect x="8" y="3" width="9.3" height="7.8" fill="#fff37a"/><rect x="0" y="11.8" width="17.3" height="3.8" fill="#fff37a"/><path d="M1.6 9.4L8.5 1.5" stroke="#f4d6a8" stroke-width="2.4" stroke-linecap="round"/><path d="M1.2 10L2.6 8.3" stroke="#707888" stroke-width="1.5"/><text x="8.4" y="10" font-family="Liberation Serif" font-size="8.6" fill="#5a5a5a">ab</text></svg>
<div class="r" style="left:533px;top:89px;width:1px;height:20px;background:#8a8a8a;"></div>
<svg style="left:545px;top:93px" width="18" height="15" viewBox="0 0 18 15"><path d="M1 1.5H15M1 5.5H15M1 9.7H8" stroke="#a4a4a4" stroke-width="1"/><path d="M10.3 13.6V8.3L15.3 13.6V8.3" stroke="#72b2dc" stroke-width="1.1" fill="none"/></svg>
<svg style="left:567px;top:96px" width="7" height="5" viewBox="0 0 7 5"><path d="M0.6 1H6.2L3.4 3.8Z" fill="#808080"/></svg>
<svg style="left:578px;top:101.5px" width="8" height="6" viewBox="0 0 8 6"><path d="M0.8 0.7L3.3 3L0.8 5.3M4.3 0.7L6.8 3L4.3 5.3" stroke="#707070" stroke-width="1.1" fill="none"/></svg>
<svg style="left:16px;top:509px" width="14" height="14" viewBox="0 0 14 14"><circle cx="6.7" cy="6.6" r="5.3" fill="none" stroke="#767676" stroke-width="1"/><path d="M3.8 6.6H9.6" stroke="#767676" stroke-width="1"/></svg>
<div class="tx" style="left:41.6px;top:510.5px;font-size:12px;color:#000;letter-spacing:-0.5px;-webkit-text-stroke:0.12px #000">71%</div>
<div class="r" style="left:78px;top:508px;width:14px;height:17px;background:#d9d9d9;border:1px solid #adadad"></div>
<svg style="left:80px;top:514px" width="10" height="6" viewBox="0 0 10 6"><path d="M1 1L5 4.8L9 1" stroke="#505050" stroke-width="1.3" fill="none"/></svg>
<svg style="left:100px;top:509px" width="14" height="14" viewBox="0 0 14 14"><circle cx="6.7" cy="6.6" r="5.3" fill="none" stroke="#767676" stroke-width="1"/><path d="M3.8 6.6H9.6M6.7 3.7V9.5" stroke="#767676" stroke-width="1"/></svg>
<div class="r" style="left:121px;top:506px;width:1px;height:20px;background:#8a8a8a;"></div>
<svg style="left:133px;top:511px" width="12" height="11" viewBox="0 0 12 11"><path d="M1.4 0.5V10" stroke="#90b8dc" stroke-width="1.2"/><path d="M2 5.3L10.8 0.8V9.8Z" fill="#c6d6f6" stroke="#90b8dc" stroke-width="1.1" stroke-linejoin="round"/></svg>
<svg style="left:158px;top:511px" width="11" height="11" viewBox="0 0 11 11"><path d="M1 5.3L9.8 0.8V9.8Z" fill="#c6d6f6" stroke="#90b8dc" stroke-width="1.1" stroke-linejoin="round"/></svg>
<div class="tx" style="left:201px;top:510.5px;font-size:12px;color:#000;letter-spacing:-0.2px;-webkit-text-stroke:0.15px #000">1 / 1</div>
<svg style="left:256px;top:511px" width="11" height="11" viewBox="0 0 11 11"><path d="M9.8 5.3L1 0.8V9.8Z" fill="#c6d6f6" stroke="#90b8dc" stroke-width="1.1" stroke-linejoin="round"/></svg>
<svg style="left:280px;top:511px" width="12" height="11" viewBox="0 0 12 11"><path d="M10 0.5V10" stroke="#90b8dc" stroke-width="1.2"/><path d="M9.5 5.3L0.8 0.8V9.8Z" fill="#c6d6f6" stroke="#90b8dc" stroke-width="1.1" stroke-linejoin="round"/></svg>
<div class="r" style="left:300px;top:506px;width:1px;height:20px;background:#8a8a8a;"></div>
<svg style="left:311px;top:511px" width="16" height="11" viewBox="0 0 16 11"><path d="M1.2 5.4L9.5 1V3.6H11.5V7.2H9.5V9.8Z" fill="#78a0f0" stroke="#3a70c0" stroke-width="1.1" stroke-linejoin="round"/><path d="M13.5 3.5V7.5" stroke="#3a70c0" stroke-width="1.1"/></svg>
<svg style="left:334px;top:511px" width="16" height="11" viewBox="0 0 16 11"><path d="M14.5 5.4L6.2 1V3.6H4.2V7.2H6.2V9.8Z" fill="#c6d6f8" stroke="#9cc0e2" stroke-width="1.1" stroke-linejoin="round"/><path d="M1.6 3.5V7.5" stroke="#9cc0e2" stroke-width="1.1"/></svg>
<svg style="left:356px;top:518.5px" width="8" height="6" viewBox="0 0 8 6"><path d="M0.8 0.7L3.3 3L0.8 5.3M4.3 0.7L6.8 3L4.3 5.3" stroke="#707070" stroke-width="1.1" fill="none"/></svg>
<svg style="left:383px;top:507px" width="17" height="17" viewBox="0 0 17 17"><path d="M5.6 11.6L13.6 3.6" stroke="#2e7bbd" stroke-width="5.4"/><path d="M11.3 3.3L13.9 5.9" stroke="#fff" stroke-width="0.9"/><path d="M3.6 11.8L5.4 13.6" stroke="#fff" stroke-width="0.9"/><path d="M1 15.7L2.5 11.2L5.5 14.2Z" fill="#2e7bbd"/></svg>
<div class="r" style="left:408px;top:510px;width:14px;height:12px;border:1.3px solid #5e5e5e"></div>
<svg style="left:432px;top:510px" width="14" height="14" viewBox="0 0 14 14"><path d="M0.6 0.6L13 12.9" stroke="#6a6a6a" stroke-width="1.1"/></svg>
<svg style="left:455px;top:510px" width="16" height="13" viewBox="0 0 16 13"><ellipse cx="7.8" cy="6" rx="6.8" ry="5.3" fill="none" stroke="#6a6a6a" stroke-width="1.2"/></svg>
<svg style="left:482px;top:507px" width="11" height="18" viewBox="0 0 11 18"><path d="M5.5 1L1.2 8.5L3.4 12.3M5.5 1L9.8 8.5L7.6 12.3" stroke="#6a6a6a" stroke-width="1.1" fill="none"/><path d="M5.5 2V8.5" stroke="#6a6a6a" stroke-width="1.2"/><path d="M5.5 1.2L3.8 4.5H7.2Z" fill="#6a6a6a"/><rect x="3" y="13.3" width="5" height="3.3" fill="#7aa0f0" stroke="#2e7bbd" stroke-width="1"/><path d="M2 13.3H9" stroke="#2e7bbd" stroke-width="1.2"/></svg>
<div class="r" style="left:501px;top:506px;width:1px;height:20px;background:#8a8a8a;"></div>
<div class="r" style="left:513px;top:515px;width:16px;height:2px;background:#a8a8a8;"></div>
<svg style="left:535px;top:514px" width="7" height="4" viewBox="0 0 7 4"><path d="M0.5 0.3H6.3L3.4 3.3Z" fill="#808080"/></svg>
<div class="r" style="left:549px;top:515px;width:16px;height:2px;background:#a8a8a8;"></div>
<svg style="left:572px;top:514px" width="7" height="4" viewBox="0 0 7 4"><path d="M0.5 0.3H6.3L3.4 3.3Z" fill="#808080"/></svg>
<svg style="left:584px;top:508px" width="16" height="16" viewBox="0 0 16 16"><path d="M1.5 1.5H14.5V14.5H1.5Z" fill="none" stroke="#c8d8e8" stroke-width="0.8"/><rect x="0.19999999999999996" y="0.19999999999999996" width="2.6" height="2.6" fill="#fff" stroke="#5a9ad0" stroke-width="0.9"/><rect x="6.7" y="0.19999999999999996" width="2.6" height="2.6" fill="#fff" stroke="#5a9ad0" stroke-width="0.9"/><rect x="13.2" y="0.19999999999999996" width="2.6" height="2.6" fill="#fff" stroke="#5a9ad0" stroke-width="0.9"/><rect x="0.19999999999999996" y="6.7" width="2.6" height="2.6" fill="#fff" stroke="#5a9ad0" stroke-width="0.9"/><rect x="13.2" y="6.7" width="2.6" height="2.6" fill="#fff" stroke="#5a9ad0" stroke-width="0.9"/><rect x="0.19999999999999996" y="13.2" width="2.6" height="2.6" fill="#fff" stroke="#5a9ad0" stroke-width="0.9"/><rect x="6.7" y="13.2" width="2.6" height="2.6" fill="#fff" stroke="#5a9ad0" stroke-width="0.9"/><rect x="13.2" y="13.2" width="2.6" height="2.6" fill="#fff" stroke="#5a9ad0" stroke-width="0.9"/></svg>
<svg style="left:607px;top:518.5px" width="8" height="6" viewBox="0 0 8 6"><path d="M0.8 0.7L3.3 3L0.8 5.3M4.3 0.7L6.8 3L4.3 5.3" stroke="#707070" stroke-width="1.1" fill="none"/></svg>
<svg style="left:5px;top:534px" width="18" height="17" viewBox="0 0 18 17"><path d="M1.3 2.2Q4.5 2 7.2 0.8Q9.9 2 13.1 2.2V7.5Q13.1 11.8 7.2 14.8Q1.3 11.8 1.3 7.5Z" fill="#fbdea0" stroke="#d8a46a" stroke-width="1"/><path d="M7.2 1V14.5" stroke="#d8a46a" stroke-width="1"/><circle cx="12" cy="11.9" r="4.1" fill="#e4103c"/><path d="M10.4 10.3L13.6 13.5M13.6 10.3L10.4 13.5" stroke="#fff" stroke-width="0.9"/></svg></body></html>
